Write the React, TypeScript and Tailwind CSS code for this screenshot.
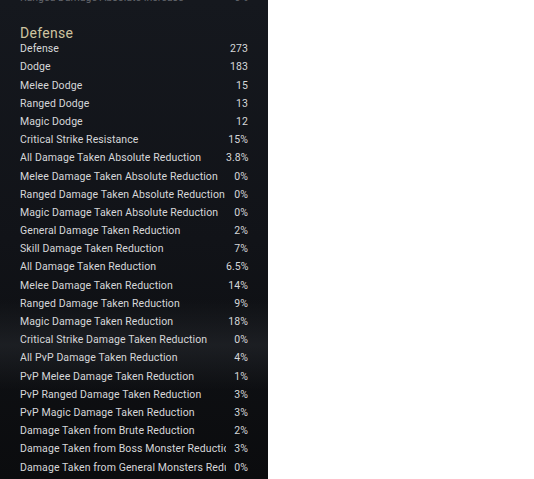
import React from 'react';

const rows: [string, string][] = [
    ['Defense', '273'],
    ['Dodge', '183'],
    ['Melee Dodge', '15'],
    ['Ranged Dodge', '13'],
    ['Magic Dodge', '12'],
    ['Critical Strike Resistance', '15%'],
    ['All Damage Taken Absolute Reduction', '3.8%'],
    ['Melee Damage Taken Absolute Reduction', '0%'],
    ['Ranged Damage Taken Absolute Reduction', '0%'],
    ['Magic Damage Taken Absolute Reduction', '0%'],
    ['General Damage Taken Reduction', '2%'],
    ['Skill Damage Taken Reduction', '7%'],
    ['All Damage Taken Reduction', '6.5%'],
    ['Melee Damage Taken Reduction', '14%'],
    ['Ranged Damage Taken Reduction', '9%'],
    ['Magic Damage Taken Reduction', '18%'],
    ['Critical Strike Damage Taken Reduction', '0%'],
    ['All PvP Damage Taken Reduction', '4%'],
    ['PvP Melee Damage Taken Reduction', '1%'],
    ['PvP Ranged Damage Taken Reduction', '3%'],
    ['PvP Magic Damage Taken Reduction', '3%'],
    ['Damage Taken from Brute Reduction', '2%'],
    ['Damage Taken from Boss Monster Reduction', '3%'],
    ['Damage Taken from General Monsters Reduction', '0%'],
];

export default function App() {
    return (
        <div className="w-[534px] h-[479px] bg-white overflow-hidden" style={{ fontFamily: 'Roboto, "Liberation Sans", sans-serif' }}>
            <div className="relative w-[268px] h-[479px] overflow-hidden bg-gradient-to-b from-[#15181e] via-[#111318] to-[#0b0c0e]">
                {/* brushed texture band */}
                <div className="absolute left-0 right-0 top-[300px] h-[90px] bg-gradient-to-b from-transparent via-[#25282d]/60 to-transparent" />
                <div className="relative pl-[20px] pr-[20px]">
                    {/* previous section tail */}
                    <div className="flex justify-between items-center h-[18px] -mt-[11px] text-[10.5px] text-[#62656b]">
                        <span>Ranged Damage Absolute Increase</span>
                        <span>0%</span>
                    </div>

                    <div className="mt-[17px] text-[14px] leading-[18px] text-[#cfc4a0] tracking-[0.3px]">Defense</div>

                    <div className="flex flex-col -mt-[2px]">
                        {rows.map(([label, value], i) => (
                            <div key={i} className="flex items-center h-[18.2px] text-[10.5px] text-[#d6d7d9] tracking-[0.1px]">
                                <span className="w-[206px] shrink-0 whitespace-nowrap overflow-hidden">{label}</span>
                                <span className="flex-1 text-right whitespace-nowrap">{value}</span>
                            </div>
                        ))}
                    </div>
                </div>
            </div>
        </div>
    );
}
